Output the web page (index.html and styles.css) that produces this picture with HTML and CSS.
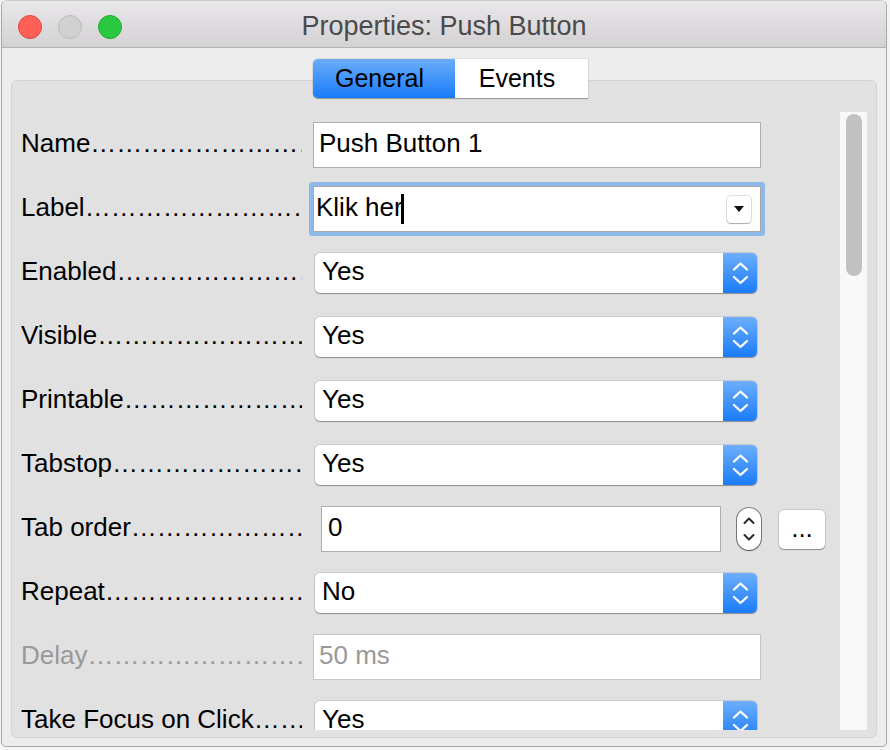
FILE: index.html
```html
<!DOCTYPE html>
<html lang="en">
  <head>
    <meta charset="UTF-8" />
    <meta name="viewport" content="width=device-width, initial-scale=1.0" />
    <title>Properties: Push Button</title>
    <link rel="stylesheet" href="styles.css">
  </head>

  <body>
    <div class="window">
      <!-- Title Bar -->
      <div class="titlebar">
        <div class="lights">
          <span class="light close"></span>
          <span class="light minimize"></span>
          <span class="light zoom"></span>
        </div>
        <div class="title">Properties: Push Button</div>
        <div></div>
      </div>

      <div class="window-body">
        <!-- Tabs -->
        <div class="tabs">
          <div class="tab active">General</div>
          <div class="tab">Events</div>
        </div>

        <!-- Tab Page -->
        <div class="panel">
          <div class="rows">
            <div class="row">
              <div class="label"><span>Name</span><span class="dots">……………………………………</span></div>
              <div class="text-field">Push Button 1</div>
            </div>

            <div class="row">
              <div class="label"><span>Label</span><span class="dots">……………………………………</span></div>
              <div class="combo">
                <span>Klik her</span><span class="caret"></span>
                <span class="combo-btn">
                  <svg width="12" height="8" viewBox="0 0 12 8"><polygon points="1,1 11,1 6,7" fill="#111"/></svg>
                </span>
              </div>
            </div>

            <div class="row">
              <div class="label"><span>Enabled</span><span class="dots">……………………………………</span></div>
              <div class="select"><span>Yes</span><span class="stepper"><svg width="34" height="40" viewBox="0 0 34 40"><path d="M11 16.5 L17.5 10.5 L24 16.5 M11 24 L17.5 30 L24 24" fill="none" stroke="#fff" stroke-width="2.3" stroke-linecap="round" stroke-linejoin="round"/></svg></span></div>
            </div>

            <div class="row">
              <div class="label"><span>Visible</span><span class="dots">……………………………………</span></div>
              <div class="select"><span>Yes</span><span class="stepper"><svg width="34" height="40" viewBox="0 0 34 40"><path d="M11 16.5 L17.5 10.5 L24 16.5 M11 24 L17.5 30 L24 24" fill="none" stroke="#fff" stroke-width="2.3" stroke-linecap="round" stroke-linejoin="round"/></svg></span></div>
            </div>

            <div class="row">
              <div class="label"><span>Printable</span><span class="dots">……………………………………</span></div>
              <div class="select"><span>Yes</span><span class="stepper"><svg width="34" height="40" viewBox="0 0 34 40"><path d="M11 16.5 L17.5 10.5 L24 16.5 M11 24 L17.5 30 L24 24" fill="none" stroke="#fff" stroke-width="2.3" stroke-linecap="round" stroke-linejoin="round"/></svg></span></div>
            </div>

            <div class="row">
              <div class="label"><span>Tabstop</span><span class="dots">……………………………………</span></div>
              <div class="select"><span>Yes</span><span class="stepper"><svg width="34" height="40" viewBox="0 0 34 40"><path d="M11 16.5 L17.5 10.5 L24 16.5 M11 24 L17.5 30 L24 24" fill="none" stroke="#fff" stroke-width="2.3" stroke-linecap="round" stroke-linejoin="round"/></svg></span></div>
            </div>

            <div class="row">
              <div class="label"><span>Tab order</span><span class="dots">……………………………………</span></div>
              <div class="tab-order">
                <div class="text-field short">0</div>
                <span class="spin">
                  <svg width="24" height="42" viewBox="0 0 24 42"><path d="M7.5 15 L12 10.5 L16.5 15 M7.5 27 L12 31.5 L16.5 27" fill="none" stroke="#2a2a2a" stroke-width="2" stroke-linecap="round" stroke-linejoin="round"/></svg>
                </span>
                <span class="more-btn">...</span>
              </div>
            </div>

            <div class="row">
              <div class="label"><span>Repeat</span><span class="dots">……………………………………</span></div>
              <div class="select"><span>No</span><span class="stepper"><svg width="34" height="40" viewBox="0 0 34 40"><path d="M11 16.5 L17.5 10.5 L24 16.5 M11 24 L17.5 30 L24 24" fill="none" stroke="#fff" stroke-width="2.3" stroke-linecap="round" stroke-linejoin="round"/></svg></span></div>
            </div>

            <div class="row">
              <div class="label disabled"><span>Delay</span><span class="dots">……………………………………</span></div>
              <div class="text-field disabled">50 ms</div>
            </div>

            <div class="row">
              <div class="label"><span>Take Focus on Click</span><span class="dots">……………………………………</span></div>
              <div class="select"><span>Yes</span><span class="stepper"><svg width="34" height="40" viewBox="0 0 34 40"><path d="M11 16.5 L17.5 10.5 L24 16.5 M11 24 L17.5 30 L24 24" fill="none" stroke="#fff" stroke-width="2.3" stroke-linecap="round" stroke-linejoin="round"/></svg></span></div>
            </div>
          </div>

          <!-- Scrollbar -->
          <div class="scrollbar">
            <div class="thumb"></div>
          </div>
        </div>
      </div>
    </div>
  </body>
</html>
```

FILE: styles.css
```css
/* Global Styles */
* {
  box-sizing: border-box;
}

body {
  margin: 0;
  width: 890px;
  height: 750px;
  overflow: hidden;
  background-color: #f4f4f4;
  font-family: "Liberation Sans", Arial, sans-serif;
  color: #000;
}

/* Window */
.window {
  margin-left: 1px;
  width: 886px;
  height: 747px;
  border: 1px solid #a8a8a8;
  border-top-color: #c9c9c9;
  border-radius: 6px 6px 5px 5px;
  overflow: hidden;
  background-color: #ececec;
}

.titlebar {
  height: 47px;
  padding-top: 5px;
  display: grid;
  grid-template-columns: 1fr auto 1fr;
  align-items: center;
  border-bottom: 1px solid #b3b3b3;
  background: linear-gradient(#e9e7e9, #d3d1d3);
}

.lights {
  display: flex;
  gap: 16px;
  padding-left: 16px;
}

.light {
  width: 24px;
  height: 24px;
  border-radius: 50%;
}

.close {
  background-color: #fe5f57;
  border: 1px solid #e2463f;
}

.minimize {
  background-color: #d2d1d2;
  border: 1px solid #bcbbbc;
}

.zoom {
  background-color: #29c840;
  border: 1px solid #1dac2c;
}

.title {
  font-size: 27px;
  color: #4a4a4a;
}

/* Window Body */
.window-body {
  padding: 11px 9px 8px 9px;
}

.tabs {
  position: relative;
  z-index: 1;
  display: flex;
  margin-left: 302px;
  margin-bottom: -18px;
  width: 275px;
  height: 39px;
  border-radius: 5px 0 0 5px;
  box-shadow: 0 1px 1px rgba(0, 0, 0, 0.3), 0 0 0 1px rgba(0, 0, 0, 0.06);
}

.tab {
  display: flex;
  align-items: center;
  justify-content: center;
  width: 133px;
  padding-right: 9px;
  font-size: 25px;
  background-color: #fff;
}

.tab.active {
  width: 142px;
  border-radius: 5px 0 0 5px;
  background: linear-gradient(#6badfb, #187bf8);
}

/* Tab Page */
.panel {
  display: flex;
  height: 658px;
  padding: 31px 9px 7px 9px;
  border: 1px solid #d3d3d3;
  border-radius: 6px;
  background-color: #e1e1e1;
}

.rows {
  flex: 1;
  padding-top: 1px;
  overflow: hidden;
}

.row {
  display: flex;
  align-items: center;
  height: 64px;
  font-size: 26px;
}

.label {
  display: flex;
  flex: none;
  width: 281px;
  margin-right: 11px;
  padding-bottom: 3px;
  white-space: nowrap;
  overflow: hidden;
}

.label .dots {
  flex: 1;
  overflow: hidden;
}

.label.disabled {
  color: #999;
}

/* Fields */
.text-field {
  width: 448px;
  height: 46px;
  line-height: 41px;
  padding-left: 5px;
  border: 1px solid #adadad;
  background-color: #fff;
}

.text-field.short {
  width: 400px;
  margin-left: 8px;
  padding-left: 6px;
}

.text-field.disabled {
  color: #999;
  border-color: #c6c6c6;
}

.combo {
  display: flex;
  align-items: center;
  width: 448px;
  height: 46px;
  padding-left: 2px;
  padding-bottom: 3px;
  border: 1px solid #a8a8a8;
  border-radius: 1px;
  background-color: #fff;
  box-shadow: 0 0 0 4px #8fb9e9;
}

.caret {
  width: 3px;
  height: 30px;
  margin-left: -2px;
  margin-top: 2px;
  background-color: #000;
}

.combo-btn {
  display: flex;
  align-items: center;
  justify-content: center;
  width: 24px;
  height: 27px;
  margin-left: auto;
  margin-right: 9px;
  margin-top: 3px;
  border-radius: 4px;
  background-color: #fff;
  box-shadow: 0 0 0 1px rgba(0, 0, 0, 0.12), 0 1px 1px rgba(0, 0, 0, 0.25);
}

.select {
  display: flex;
  align-items: center;
  width: 442px;
  height: 40px;
  margin-left: 2px;
  padding-left: 7px;
  border-radius: 5px;
  background-color: #fff;
  box-shadow: 0 0 0 1px rgba(0, 0, 0, 0.1), 0 1px 1px rgba(0, 0, 0, 0.3);
}

.select > span:first-child {
  margin-top: -4px;
}

.stepper {
  display: block;
  width: 34px;
  height: 40px;
  margin-left: auto;
  border-radius: 0 5px 5px 0;
  background: linear-gradient(#6eaefa, #1a7bf8);
}

.stepper svg,
.spin svg {
  display: block;
}

/* Tab order */
.tab-order {
  display: flex;
  align-items: center;
}

.spin {
  width: 24px;
  height: 42px;
  margin-left: 16px;
  border-radius: 12px;
  background-color: #fff;
  box-shadow: 0 0 0 1px rgba(0, 0, 0, 0.45), 0 1px 1px rgba(0, 0, 0, 0.3);
}

.more-btn {
  display: flex;
  justify-content: center;
  width: 46px;
  height: 39px;
  line-height: 36px;
  margin-left: 18px;
  border-radius: 5px;
  background-color: #fff;
  box-shadow: 0 0 0 1px rgba(0, 0, 0, 0.1), 0 1px 1px rgba(0, 0, 0, 0.3);
}

/* Scrollbar */
.scrollbar {
  flex: none;
  width: 27px;
  padding: 2px 0 0 6px;
  background-color: #f8f8f8;
}

.thumb {
  width: 16px;
  height: 162px;
  border-radius: 8px;
  background-color: #c1c1c1;
}
```
